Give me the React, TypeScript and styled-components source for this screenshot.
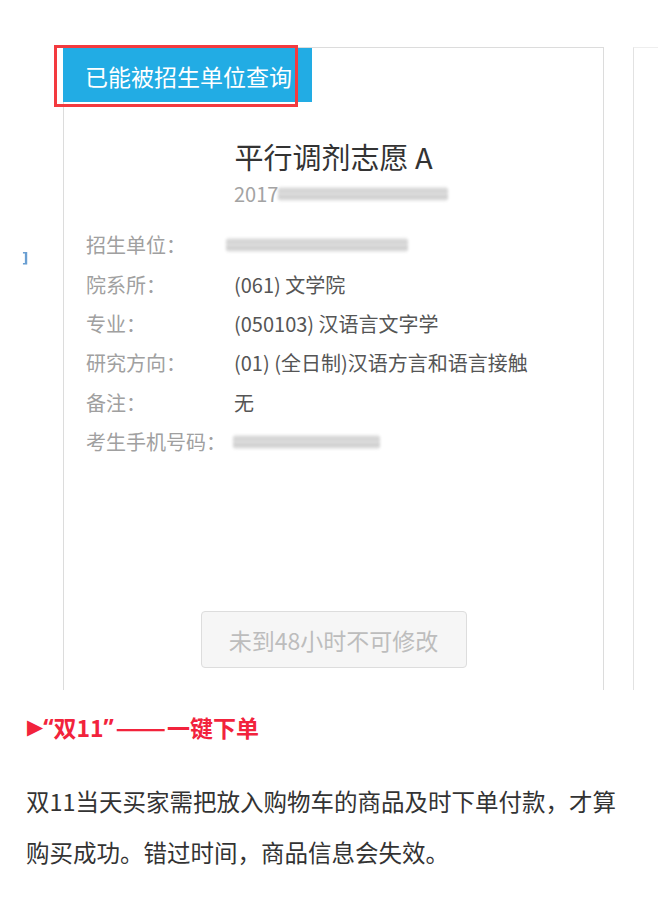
import React from "react";
import styled, { createGlobalStyle } from "styled-components";

const Global = createGlobalStyle`
  html, body { margin: 0; padding: 0; background: #fff; }
  body { font-family: "Noto Sans CJK SC", "Noto Sans", sans-serif; }
`;

const Page = styled.div`
  width: 658px;
  background: #fff;
`;

const Shot = styled.div`
  position: relative;
  height: 690px;
  overflow: hidden;
  display: flex;
  align-items: flex-start;
  padding-top: 47px;
  box-sizing: border-box;
`;

const PrevEdge = styled.div`
  width: 63px;
  flex: none;
  padding: 204px 0 0 22px;
  box-sizing: border-box;
`;

const Peek = styled.span`
  display: block;
  color: #6a9fd2;
  font-family: "DejaVu Sans", sans-serif;
  font-size: 14px;
  font-weight: 700;
  line-height: 14px;
  filter: blur(0.3px);
`;

const Card = styled.div`
  width: 541px;
  height: 643px;
  flex: none;
  box-sizing: border-box;
  border: 1px solid #dcdcdc;
  border-bottom: none;
  display: flex;
  flex-direction: column;
  padding-bottom: 22px;
`;

const NextCard = styled.div`
  margin-left: 29px;
  width: 60px;
  height: 643px;
  flex: none;
  border-left: 1px solid #e2e2e2;
  border-top: 1px solid #eeeeee;
`;

const Badge = styled.div`
  align-self: flex-start;
  margin-left: -1px;
  width: 249px;
  height: 54px;
  box-sizing: border-box;
  padding: 2px 0 0 22px;
  background: #22ace4;
  color: #fff;
  font-size: 23px;
  line-height: 52px;
  white-space: nowrap;
`;

const Highlight = styled.div`
  position: absolute;
  left: 54px;
  top: 45px;
  width: 244px;
  height: 62px;
  box-sizing: border-box;
  border: 3px solid #f33a3f;
  pointer-events: none;
`;

const Title = styled.div`
  margin-top: 35px;
  text-align: center;
  color: #333;
  font-size: 29px;
  line-height: 38px;
`;

const Sub = styled.div`
  margin-top: 6px;
  display: flex;
  align-items: center;
  padding-left: 170px;
  color: #a3a3a3;
  font-size: 20px;
  line-height: 26px;
`;

const Blur = styled.span<{ $w: number; $shift?: number }>`
  display: inline-block;
  width: ${(p) => p.$w}px;
  height: 14px;
  margin-left: ${(p) => p.$shift ?? 0}px;
  background: linear-gradient(
    180deg,
    #e8e8e8 0%,
    #cfcfcf 30%,
    #e2e2e2 50%,
    #c9c9c9 70%,
    #ececec 100%
  );
  filter: blur(1.6px);
  border-radius: 3px;
`;

const Info = styled.div`
  margin-top: 18px;
  padding-left: 22px;
  display: grid;
  grid-template-columns: 148px 1fr;
  grid-auto-rows: 39.4px;
  align-items: center;
  font-size: 20px;
`;

const Label = styled.div`
  color: #a0a0a0;
  white-space: nowrap;
`;

const Value = styled.div`
  color: #555;
  white-space: nowrap;
  display: flex;
  align-items: center;
`;

const Action = styled.button`
  margin-top: auto;
  align-self: center;
  width: 266px;
  height: 57px;
  border: 1px solid #dddddd;
  border-radius: 4px;
  background: #f6f6f6;
  color: #bdbdbd;
  font-family: "Noto Sans CJK SC", "Noto Sans", sans-serif;
  font-size: 23px;
  padding: 0;
  cursor: default;
`;

const Heading = styled.div`
  margin: 22px 0 0 27px;
  color: #f2233c;
  font-size: 23px;
  font-weight: 700;
  line-height: 30px;
  display: flex;
  align-items: center;
  white-space: nowrap;
`;

const Arrow = styled.span`
  font-family: "DejaVu Sans", sans-serif;
  font-size: 21px;
  font-weight: 400;
  line-height: 30px;
`;

const Quote = styled.span`
  font-family: "Noto Sans", sans-serif;
  font-weight: 700;
`;

const Dash = styled.span`
  display: inline-block;
  transform: scaleX(1.3);
  margin: 0 7px;
`;

const Para = styled.p`
  margin: 34px 26px 0 26px;
  color: #333;
  font-size: 23.5px;
  line-height: 51px;
`;

const rows: { label: string; value?: string; blur?: number; shift?: number }[] = [
  { label: "招生单位：", blur: 182, shift: -8 },
  { label: "院系所：", value: "(061) 文学院" },
  { label: "专业：", value: "(050103) 汉语言文字学" },
  { label: "研究方向：", value: "(01) (全日制)汉语方言和语言接触" },
  { label: "备注：", value: "无" },
  { label: "考生手机号码：", blur: 147, shift: -1 },
];

export default function App() {
  return (
    <Page>
      <Global />
      <Shot>
        <PrevEdge>
          <Peek>]</Peek>
        </PrevEdge>
        <Card>
          <Badge>已能被招生单位查询</Badge>
          <Title>平行调剂志愿 A</Title>
          <Sub>
            2017
            <Blur $w={170} />
          </Sub>
          <Info>
            {rows.map((r) => (
              <React.Fragment key={r.label}>
                <Label>{r.label}</Label>
                <Value>
                  {r.value ?? <Blur $w={r.blur ?? 0} $shift={r.shift} />}
                </Value>
              </React.Fragment>
            ))}
          </Info>
          <Action disabled>未到48小时不可修改</Action>
        </Card>
        <NextCard />
        <Highlight />
      </Shot>
      <Heading>
        <Arrow>▶</Arrow>
        <Quote>“</Quote>双11<Quote>”</Quote>
        <Dash>——</Dash>
        一键下单
      </Heading>
      <Para>
        双11当天买家需把放入购物车的商品及时下单付款，才算购买成功。错过时间，商品信息会失效。
      </Para>
    </Page>
  );
}
